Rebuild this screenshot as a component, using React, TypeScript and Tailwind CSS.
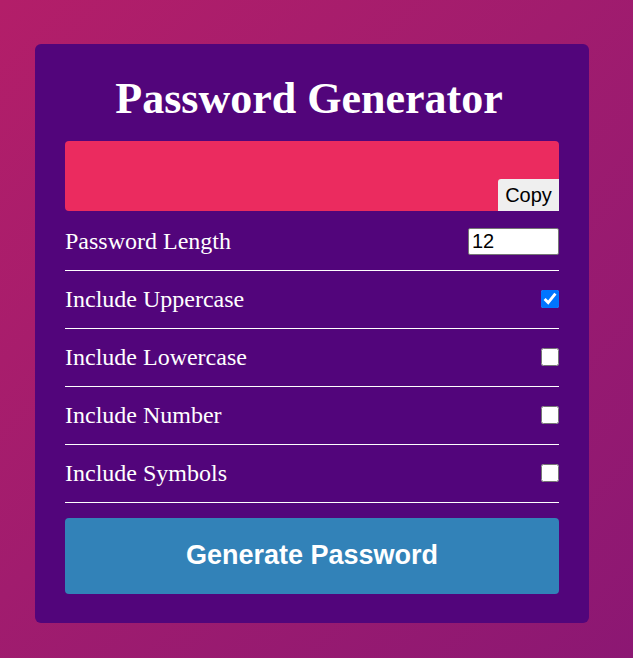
import { useState } from 'react';

const options = [
  { key: 'upper', label: 'Include Uppercase', initial: true },
  { key: 'lower', label: 'Include Lowercase', initial: false },
  { key: 'number', label: 'Include Number', initial: false },
  { key: 'symbol', label: 'Include Symbols', initial: false },
];

export default function App() {
  const [length, setLength] = useState('12');
  const [checked, setChecked] = useState<Record<string, boolean>>(
    Object.fromEntries(options.map((o) => [o.key, o.initial]))
  );

  return (
    <div className="min-h-[658px] w-full bg-gradient-to-br from-[#b31e69] to-[#8c1773] pl-[35px] pt-[44px] pb-[35px] font-['Liberation_Serif',serif]">
      <div className="w-[554px] rounded-[6px] bg-[#52057b] p-[30px] pb-[29px] text-white">
        <h1 className="m-0 mb-[16px] pr-[6px] text-center text-[44px] font-bold leading-[1.15]">Password Generator</h1>

        <div className="flex h-[70px] items-end justify-end rounded-[4px] bg-[#eb2b5f]">
          <button className="h-[32px] w-[61px] rounded-tl-[3px] bg-[#efefef] font-['Liberation_Sans',sans-serif] text-[20px] text-black">
            Copy
          </button>
        </div>

        <div className="mt-[1px] flex items-center justify-between border-b border-white pt-[16px] pb-[15px]">
          <span className="text-[24px] leading-[27px]">Password Length</span>
          <input
            type="number"
            value={length}
            onChange={(e) => setLength(e.target.value)}
            className="h-[27px] w-[91px] rounded-[2px] border border-[#767676] bg-white px-[3px] font-['Liberation_Sans',sans-serif] text-[20px] text-black outline-none [appearance:textfield] [&::-webkit-inner-spin-button]:appearance-none"
          />
        </div>

        {options.map((o) => (
          <div key={o.key} className="flex items-center justify-between border-b border-white py-[15px]">
            <span className="text-[24px] leading-[27px]">{o.label}</span>
            <input
              type="checkbox"
              checked={checked[o.key]}
              onChange={() => setChecked({ ...checked, [o.key]: !checked[o.key] })}
              className="h-[18px] w-[18px]"
            />
          </div>
        ))}

        <button className="mt-[15px] h-[76px] w-full rounded-[4px] bg-[#3282b8] font-['Liberation_Sans',sans-serif] text-[27px] font-bold text-white">
          Generate Password
        </button>
      </div>
    </div>
  );
}
